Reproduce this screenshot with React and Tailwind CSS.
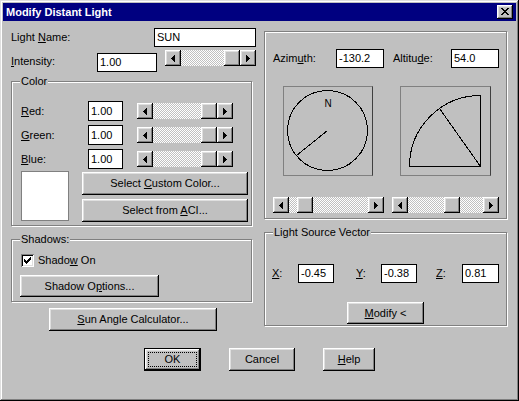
import React from "react";

const BEVEL =
  "bg-[#c0c0c0] shadow-[inset_-1px_-1px_#000,inset_1px_1px_#fff,inset_-2px_-2px_#808080,inset_2px_2px_#dfdfdf]";
const ETCHED =
  "border border-[#808080] shadow-[inset_1px_1px_#fff,1px_1px_#fff]";

function Px({ rects, w = 16, h = 16 }) {
  return (
    <svg width={w} height={h} viewBox={`0 0 ${w} ${h}`} shapeRendering="crispEdges">
      {rects.map(([x, y, rw, rh], i) => (
        <rect key={i} x={x} y={y} width={rw} height={rh} fill="#000" />
      ))}
    </svg>
  );
}

const LEFT = [
  [6, 8, 1, 1],
  [7, 7, 1, 3],
  [8, 6, 1, 5],
  [9, 5, 1, 7],
];
const RIGHT = [
  [6, 5, 1, 7],
  [7, 6, 1, 5],
  [8, 7, 1, 3],
  [9, 8, 1, 1],
];
const CLOSE = [
  [4, 3, 2, 1], [10, 3, 2, 1],
  [5, 4, 2, 1], [9, 4, 2, 1],
  [6, 5, 4, 1],
  [7, 6, 2, 1],
  [6, 7, 4, 1],
  [5, 8, 2, 1], [9, 8, 2, 1],
  [4, 9, 2, 1], [10, 9, 2, 1],
];
const CHECK = [
  [3, 5, 1, 3],
  [4, 6, 1, 3],
  [5, 7, 1, 3],
  [6, 6, 1, 3],
  [7, 5, 1, 3],
  [8, 4, 1, 3],
  [9, 3, 1, 3],
];

function Scrollbar({ className, thumb }) {
  return (
    <div className={`flex h-[16px] shrink-0 ${className}`}>
      <div className={`w-[16px] h-[16px] shrink-0 ${BEVEL}`}>
        <Px rects={LEFT} />
      </div>
      <div className="flex-1 flex bg-[image:repeating-conic-gradient(#c0c0c0_0_25%,#fff_0_50%)] bg-[length:2px_2px]">
        <div className={`w-[16px] h-[16px] shrink-0 ${BEVEL} ${thumb}`} />
      </div>
      <div className={`w-[16px] h-[16px] shrink-0 ${BEVEL}`}>
        <Px rects={RIGHT} />
      </div>
    </div>
  );
}

function Field({ className, children }) {
  return (
    <div
      className={`border border-black bg-white pl-[2px] flex items-center shrink-0 ${className}`}
    >
      {children}
    </div>
  );
}

function Btn({ className, children }) {
  return (
    <div className={`flex items-center justify-center shrink-0 ${BEVEL} ${className}`}>
      {children}
    </div>
  );
}

function GroupLabel({ children }) {
  return (
    <span className="absolute top-[-7px] left-[8px] px-[1px] bg-[#c0c0c0] leading-[13px]">
      {children}
    </span>
  );
}

export default function App() {
  return (
    <div className="w-[519px] h-[401px] bg-[#c0c0c0] flex flex-col overflow-hidden shadow-[inset_-1px_-1px_#000,inset_1px_1px_#dfdfdf,inset_-2px_-2px_#808080,inset_2px_2px_#fff] font-['Liberation_Sans',Arial,sans-serif] text-[11px] leading-[13px] text-black select-none">
      {/* Caption */}
      <div className="mx-[3px] mt-[3px] h-[18px] bg-[#000080] flex items-center pl-[3px] pr-[3px] shrink-0">
        <span className="text-white font-bold">Modify Distant Light</span>
        <div className={`ml-auto w-[16px] h-[14px] ${BEVEL}`}>
          <Px rects={CLOSE} w={16} h={14} />
        </div>
      </div>

      {/* Body */}
      <div className="flex items-start ml-[11px]">
        {/* Left column */}
        <div className="w-[246px] flex flex-col shrink-0">
          <div className="mt-[7px] flex items-center h-[19px]">
            <span className="w-[143px] shrink-0">
              Light <u>N</u>ame:
            </span>
            <Field className="w-[102px] h-[19px]">SUN</Field>
          </div>

          <div className="mt-[3px] flex items-start h-[22px]">
            <span className="w-[86px] mt-[5px] shrink-0">
              <u>I</u>ntensity:
            </span>
            <Field className="w-[60px] h-[19px] mt-[3px]">1.00</Field>
            <Scrollbar className="ml-[8px] w-[91px]" thumb="ml-auto" />
          </div>

          {/* Color group */}
          <div className={`relative mt-[9px] w-[241px] h-[145px] ${ETCHED} pl-[9px] pt-[19px] flex flex-col`}>
            <GroupLabel>Color</GroupLabel>
            <div className="flex items-center h-[20px]">
              <span className="w-[67px] shrink-0">
                <u>R</u>ed:
              </span>
              <Field className="w-[35px] h-[20px]">1.00</Field>
              <Scrollbar className="ml-[14px] w-[96px]" thumb="ml-auto" />
            </div>
            <div className="mt-[4px] flex items-center h-[20px]">
              <span className="w-[67px] shrink-0">
                <u>G</u>reen:
              </span>
              <Field className="w-[35px] h-[20px]">1.00</Field>
              <Scrollbar className="ml-[14px] w-[96px]" thumb="ml-auto" />
            </div>
            <div className="mt-[4px] flex items-center h-[20px]">
              <span className="w-[67px] shrink-0">
                <u>B</u>lue:
              </span>
              <Field className="w-[35px] h-[20px]">1.00</Field>
              <Scrollbar className="ml-[14px] w-[96px]" thumb="ml-auto" />
            </div>
            <div className="mt-[2px] flex items-start">
              <div className="w-[48px] h-[50px] border border-[#808080] bg-white shrink-0" />
              <div className="ml-[13px] mt-[1px] flex flex-col gap-[4px]">
                <Btn className="w-[166px] h-[23px]">
                  <span>
                    Select <u>C</u>ustom Color...
                  </span>
                </Btn>
                <Btn className="w-[166px] h-[23px]">
                  <span>
                    Select from <u>A</u>CI...
                  </span>
                </Btn>
              </div>
            </div>
          </div>

          {/* Shadows group */}
          <div className={`relative mt-[13px] w-[241px] h-[63px] ${ETCHED} pl-[9px] pt-[14px] flex flex-col`}>
            <GroupLabel>Shadows:</GroupLabel>
            <div className="flex items-center h-[13px]">
              <div className="w-[13px] h-[13px] bg-white shrink-0 shadow-[inset_1px_1px_#808080,inset_-1px_-1px_#fff,inset_2px_2px_#000,inset_-2px_-2px_#dfdfdf]">
                <Px rects={CHECK} w={13} h={13} />
              </div>
              <span className="ml-[4px]">
                Shado<u>w</u> On
              </span>
            </div>
            <Btn className="mt-[8px] ml-[-1px] w-[139px] h-[22px]">
              <span>
                Shadow O<u>p</u>tions...
              </span>
            </Btn>
          </div>

          <Btn className="mt-[6px] ml-[38px] w-[168px] h-[23px]">
            <span>
              <u>S</u>un Angle Calculator...
            </span>
          </Btn>
        </div>

        {/* Right column */}
        <div className="ml-[7px] w-[243px] flex flex-col shrink-0">
          <div className={`mt-[10px] w-[243px] h-[188px] ${ETCHED} pl-[8px] pt-[17px] flex flex-col`}>
            <div className="flex items-center h-[19px]">
              <span className="w-[63px] shrink-0">
                Azim<u>u</u>th:
              </span>
              <Field className="w-[48px] h-[19px]">-130.2</Field>
              <span className="ml-[9px] w-[58px] shrink-0">
                Altitu<u>d</u>e:
              </span>
              <Field className="w-[48px] h-[19px]">54.0</Field>
            </div>
            <div className="mt-[18px] flex">
              <div className="ml-[10px] w-[90px] h-[90px] border border-[#808080] border-r-[#404040] shrink-0">
                <svg width="88" height="88" viewBox="0 0 88 88">
                  <circle
                    cx="43.5"
                    cy="43.5"
                    r="40"
                    fill="none"
                    stroke="#000"
                    strokeWidth="1"
                    shapeRendering="crispEdges"
                  />
                  <text
                    x="44"
                    y="20"
                    textAnchor="middle"
                    fontSize="10"
                    fontFamily="Liberation Sans, Arial, sans-serif"
                    fill="#000"
                  >
                    N
                  </text>
                  <line
                    x1="43.5"
                    y1="43.5"
                    x2="12.5"
                    y2="68.5"
                    stroke="#000"
                    strokeWidth="1"
                    shapeRendering="crispEdges"
                  />
                </svg>
              </div>
              <div className="ml-[27px] w-[91px] h-[90px] border border-[#808080] border-r-[#404040] shrink-0">
                <svg width="89" height="88" viewBox="0 0 89 88">
                  <path
                    d="M 8.5 79.5 A 71 71 0 0 1 79.5 8.5 L 79.5 79.5 Z"
                    fill="none"
                    stroke="#000"
                    strokeWidth="1"
                    shapeRendering="crispEdges"
                  />
                  <line
                    x1="79.5"
                    y1="79.5"
                    x2="38.5"
                    y2="21.5"
                    stroke="#000"
                    strokeWidth="1"
                    shapeRendering="crispEdges"
                  />
                </svg>
              </div>
            </div>
            <div className="mt-[21px] flex">
              <Scrollbar className="w-[111px]" thumb="ml-[8px]" />
              <Scrollbar className="ml-[8px] w-[107px]" thumb="ml-[36px]" />
            </div>
          </div>

          {/* Light Source Vector */}
          <div className={`relative mt-[13px] w-[243px] h-[94px] ${ETCHED} pl-[7px] pt-[31px] flex flex-col`}>
            <GroupLabel>Light Source Vector</GroupLabel>
            <div className="flex items-center h-[19px]">
              <span className="w-[26px] shrink-0">
                <u>X</u>:
              </span>
              <Field className="w-[36px] h-[19px]">-0.45</Field>
              <span className="ml-[22px] w-[25px] shrink-0">
                <u>Y</u>:
              </span>
              <Field className="w-[36px] h-[19px]">-0.38</Field>
              <span className="ml-[19px] w-[26px] shrink-0">
                <u>Z</u>:
              </span>
              <Field className="w-[37px] h-[19px]">0.81</Field>
            </div>
            <Btn className="mt-[19px] ml-[75px] w-[77px] h-[22px]">
              <span>
                <u>M</u>odify &lt;
              </span>
            </Btn>
          </div>
        </div>
      </div>

      {/* Bottom buttons */}
      <div className="mt-[17px] ml-[144px] flex">
        <div className="relative w-[57px] h-[23px] border border-black shrink-0 flex items-center justify-center bg-[#c0c0c0] shadow-[inset_-1px_-1px_#000,inset_1px_1px_#fff,inset_-2px_-2px_#808080,inset_2px_2px_#dfdfdf]">
          <span className="absolute top-[3px] left-[3px] right-[3px] bottom-[3px] border border-dotted border-black" />
          <span>OK</span>
        </div>
        <Btn className="ml-[28px] w-[66px] h-[23px]">
          <span>Cancel</span>
        </Btn>
        <Btn className="ml-[28px] w-[52px] h-[23px]">
          <span>
            <u>H</u>elp
          </span>
        </Btn>
      </div>
    </div>
  );
}
